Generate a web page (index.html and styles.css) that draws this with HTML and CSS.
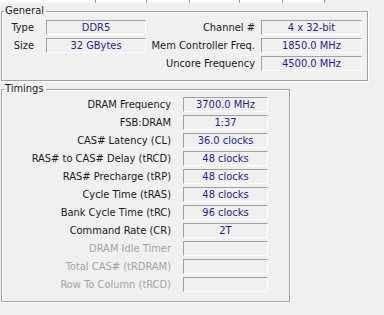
FILE: index.html
```html
<!DOCTYPE html>
<html lang="en">
<head>
  <meta charset="UTF-8">
  <title>Memory</title>
  <link rel="stylesheet" href="styles.css">
</head>
<body>
  <!-- bottom edge of the tab strip -->
  <div class="tabs">
    <span style="width: 96px"></span>
    <span style="width: 51px"></span>
    <span style="width: 43px"></span>
    <span style="width: 50px"></span>
    <span style="width: 43px"></span>
    <span style="width: 42px"></span>
  </div>

  <fieldset class="group general">
    <legend>General</legend>
    <div class="general-grid">
      <span class="label">Type</span>
      <span class="field">DDR5</span>
      <span class="label">Channel #</span>
      <span class="field">4 x 32-bit</span>

      <span class="label">Size</span>
      <span class="field">32 GBytes</span>
      <span class="label">Mem Controller Freq.</span>
      <span class="field">1850.0 MHz</span>

      <span></span>
      <span></span>
      <span class="label">Uncore Frequency</span>
      <span class="field">4500.0 MHz</span>
    </div>
  </fieldset>

  <fieldset class="group timings">
    <legend>Timings</legend>
    <div class="timings-grid">
      <span class="label">DRAM Frequency</span>
      <span class="field">3700.0 MHz</span>
      <span class="label">FSB:DRAM</span>
      <span class="field">1:37</span>
      <span class="label">CAS# Latency (CL)</span>
      <span class="field">36.0 clocks</span>
      <span class="label">RAS# to CAS# Delay (tRCD)</span>
      <span class="field">48 clocks</span>
      <span class="label">RAS# Precharge (tRP)</span>
      <span class="field">48 clocks</span>
      <span class="label">Cycle Time (tRAS)</span>
      <span class="field">48 clocks</span>
      <span class="label">Bank Cycle Time (tRC)</span>
      <span class="field">96 clocks</span>
      <span class="label">Command Rate (CR)</span>
      <span class="field">2T</span>
      <span class="label disabled">DRAM Idle Timer</span>
      <span class="field"></span>
      <span class="label disabled">Total CAS# (tRDRAM)</span>
      <span class="field"></span>
      <span class="label disabled">Row To Column (tRCD)</span>
      <span class="field"></span>
    </div>
  </fieldset>
</body>
</html>
```

FILE: styles.css
```css
body {
  margin: 0;
  width: 384px;
  height: 315px;
  overflow: hidden;
  background-color: #f0f0f0;
  font-family: "DejaVu Sans Condensed", "DejaVu Sans", sans-serif;
  font-size: 11px;
  color: #1a1a1a;
}

.tabs {
  display: flex;
  height: 3px;
}
.tabs span {
  display: block;
  height: 3px;
  background-color: #fbfbfb;
  border-right: 1px solid #9a9a9a;
  box-sizing: border-box;
}

/* etched group boxes */
.group {
  margin: 2px 0 0 1px;
  padding: 0;
  border: 1px solid #a0a0a0;
  box-shadow: 1px 1px 0 #ffffff, inset 1px 1px 0 #ffffff;
  min-width: 0;
  box-sizing: border-box;
}
.group legend {
  margin-left: 2px;
  padding: 0 2px 0 1px;
  line-height: 12px;
  color: #1a1a1a;
}
.general {
  width: 367px;
  height: 76px;
  padding: 3px 5px 0 0;
}
.timings {
  width: 289px;
  height: 219px;
  padding: 2px 0 0 0;
}

.general-grid {
  display: grid;
  grid-template-columns: 44px 100px 115px 101px;
  grid-auto-rows: 15px;
  row-gap: 3px;
}
.timings-grid {
  display: grid;
  grid-template-columns: 181px 85px;
  grid-auto-rows: 15px;
  row-gap: 3px;
}

.label {
  text-align: right;
  line-height: 15px;
  white-space: nowrap;
}
.general-grid .label {
  padding-right: 12px;
}
.general-grid .label:nth-child(4n+3) {
  padding-right: 6px;
}
.timings-grid .label {
  padding-right: 12px;
}
.label.disabled {
  color: #a3a3a3;
}

/* sunken read-only value boxes */
.field {
  box-sizing: border-box;
  border-top: 1px solid #a0a0a0;
  border-left: 1px solid #a0a0a0;
  border-bottom: 1px solid #ffffff;
  border-right: 1px solid #ffffff;
  background-color: #f0f0f0;
  text-align: center;
  line-height: 13px;
  color: #1e1e98;
  white-space: nowrap;
}
```
